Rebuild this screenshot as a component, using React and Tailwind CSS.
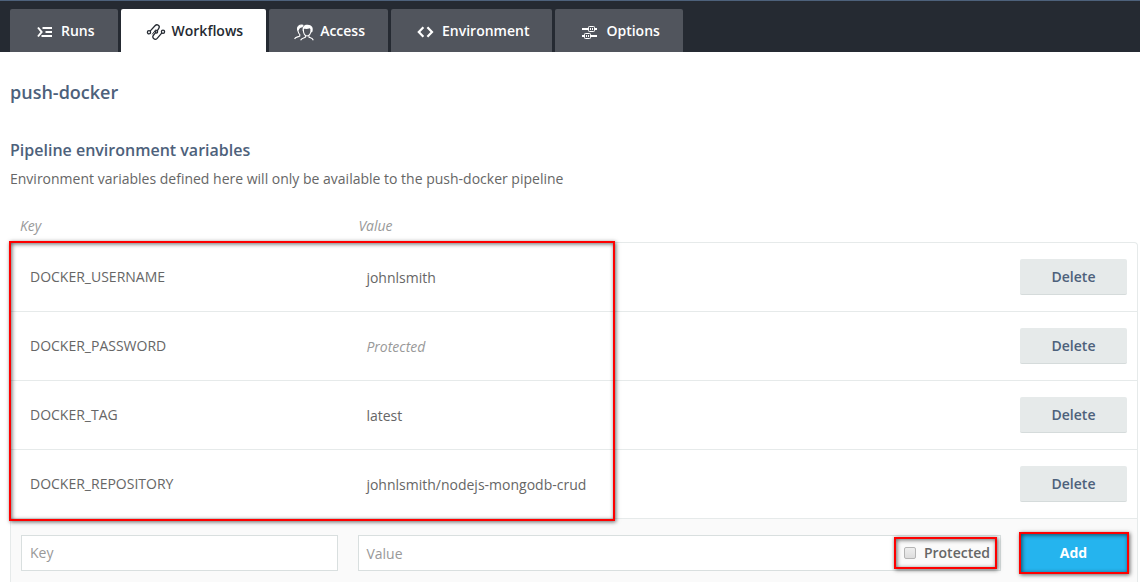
import React from "react";

function RunsIcon() {
  return (
    <svg className="shrink-0" width="16" height="12" viewBox="0 0 16 12" fill="none" stroke="currentColor" strokeWidth="2" aria-hidden="true">
      <path d="M1 1.5 L4.6 6 L1 10.5" />
      <path d="M5.5 2H15M8.5 6H15M4.5 10H15" />
    </svg>
  );
}

function WorkflowsIcon() {
  return (
    <svg className="shrink-0" width="20" height="18" viewBox="0 0 20 18" fill="none" stroke="currentColor" strokeWidth="1.3" aria-hidden="true">
      <circle cx="3" cy="9.3" r="1.6" />
      <circle cx="17" cy="8.7" r="1.6" />
      <circle cx="10.4" cy="8.8" r="1.2" />
      <path d="M4.1 8.1 L9 2.8 C11.2 .4 14.4 3 12.8 5.4 L11.2 7.8" />
      <path d="M9.4 9.8 L7.6 12 C5.4 14.6 8.8 17.8 11.2 15.4 L15.9 9.9" />
      <path d="M6.2 11.4 L10 6.4" strokeWidth="1" />
    </svg>
  );
}

function AccessIcon() {
  return (
    <svg className="shrink-0" width="20" height="17" viewBox="0 0 20 17" fill="none" stroke="currentColor" strokeWidth="1.1" aria-hidden="true">
      <path d="M9.4 5.5 C9.2 9 10.6 12 13 12 C15.6 12 17.2 9 17 5.5" />
      <path d="M8.8 7.2 C8 3 10 .6 13 .7 C17.3 .3 20 3.4 18.3 8 L17.1 8.4 C17 6.5 16.8 5.4 15.8 4.2 C14 5.2 11.4 5 10.2 4.8 Z" fill="currentColor" stroke="none" />
      <path d="M11.4 11.4 V13.2 C9.4 14 7.4 14.2 6.6 16.2 M15 11.4 V13.2 C17 14 18.6 14.2 19.3 16.2" />
      <path d="M9.2 1.2 C5.4 .4 2.6 2.6 3.8 6.4 C4.2 8.2 4.6 9.6 5.8 10.6 V12 C4 13.2 1.2 12.8 .6 15" />
      <path d="M3.6 6.6 C2.8 3 5 .6 9.6 1 L8.4 3.4 C6.8 3.4 5.4 3.8 4.6 6.4 Z" fill="currentColor" stroke="none" />
    </svg>
  );
}

function EnvironmentIcon() {
  return (
    <svg className="shrink-0" width="18" height="12" viewBox="0 0 18 12" fill="none" stroke="currentColor" strokeWidth="2.2" aria-hidden="true">
      <path d="M6.4 1.2 L1.8 6 L6.4 10.8 M10.4 1.2 L15 6 L10.4 10.8" />
    </svg>
  );
}

function OptionsIcon() {
  return (
    <svg className="shrink-0" width="16" height="13" viewBox="0 0 16 13" fill="none" stroke="currentColor" aria-hidden="true">
      <path d="M0 3H6M13 3H15M0 10H2M9 10H15" strokeWidth="2" />
      <rect x="6.5" y=".5" width="6" height="5" rx=".8" />
      <rect x="2.5" y="7.5" width="6" height="5" rx=".8" />
      <path d="M8.5 2V4M10.5 2V4M4.5 9V11M6.5 9V11" />
    </svg>
  );
}

const tabs = [
  { label: "Runs", Icon: RunsIcon },
  { label: "Workflows", Icon: WorkflowsIcon, active: true },
  { label: "Access", Icon: AccessIcon },
  { label: "Environment", Icon: EnvironmentIcon },
  { label: "Options", Icon: OptionsIcon },
];

const variables = [
  { name: "DOCKER_USERNAME", value: "johnlsmith" },
  { name: "DOCKER_PASSWORD", value: "Protected", hidden: true },
  { name: "DOCKER_TAG", value: "latest" },
  { name: "DOCKER_REPOSITORY", value: "johnlsmith/nodejs-mongodb-crud" },
];

function Highlight({ className }) {
  return (
    <div
      aria-hidden="true"
      className={
        "pointer-events-none absolute border-2 border-[#fe0000] shadow-[1px_1px_4px_rgba(0,0,0,0.6),inset_1px_1px_4px_rgba(0,0,0,0.6)] " +
        className
      }
    />
  );
}

export default function App() {
  return (
    <div className="bg-white font-['Open_Sans',sans-serif] text-sm text-[#666666]">
      <header className="border-t border-[#4d617b] bg-[#252a32] px-2.5 pt-2">
        <nav className="flex gap-[3px]">
          {tabs.map(({ label, Icon, active }) => (
            <a
              key={label}
              href={"#" + label.toLowerCase()}
              aria-current={active ? "page" : undefined}
              className={
                "flex h-[43px] items-center gap-[7px] rounded-t-xs pr-[23px] pl-[26px] font-semibold " +
                (active ? "bg-white text-[#252a32]" : "bg-[#51555d] text-white")
              }
            >
              <span className="flex w-[18px] justify-center pt-[3px]">
                <Icon />
              </span>
              {label}
            </a>
          ))}
        </nav>
      </header>

      <main className="pr-0.5 pl-2.5">
        <h1 className="pt-7 text-lg leading-6 font-semibold text-[#4d617b]">push-docker</h1>
        <h2 className="pt-9 text-base leading-5 font-semibold text-[#4d617b]">Pipeline environment variables</h2>
        <p className="pt-[7px] leading-6">Environment variables defined here will only be available to the push-docker pipeline</p>

        <div className="relative pt-[25px]">
          <table className="w-full table-fixed border-separate border-spacing-0">
            <colgroup>
              <col className="w-[30%]" />
              <col />
              <col className="w-[127px]" />
            </colgroup>
            <thead>
              <tr className="h-[26px] text-left align-top text-[#999999] italic">
                <th scope="col" className="px-2.5 font-normal">Key</th>
                <th scope="col" className="px-2.5 font-normal">Value</th>
                <td />
              </tr>
            </thead>
            <tbody>
              {variables.map(({ name, value, hidden }, i) => (
                <tr key={name} className="h-[69px]">
                  <td className={"border-t border-l border-[#e6eaea] pl-[19px] " + (i === 0 ? "rounded-tl" : "")}>{name}</td>
                  <td className={"border-t border-[#e6eaea] pt-0.5 pl-[18px] " + (hidden ? "text-[#999999] italic" : "")}>{value}</td>
                  <td className={"border-t border-r border-[#e6eaea] pr-2.5 " + (i === 0 ? "rounded-tr" : "")}>
                    <button
                      type="button"
                      className="ml-auto block h-9 w-[107px] rounded-xs border-b border-[#d5dbdb] bg-[#e6eaea] font-semibold text-[#4d617b]"
                    >
                      Delete
                    </button>
                  </td>
                </tr>
              ))}
            </tbody>
            <tfoot>
              <tr className="h-16 bg-[#fafafa]">
                <td className="border-t border-l border-[#e6eaea] px-2.5 pt-[5px]">
                  <input
                    aria-label="Key"
                    placeholder="Key"
                    className="block h-9 w-full border border-[#d9dfdf] bg-white px-2 pb-0.5 placeholder:text-[#999999]"
                  />
                </td>
                <td className="border-t border-[#e6eaea] px-2.5 pt-[5px]">
                  <div className="flex h-9 border border-[#d9dfdf] bg-white">
                    <input
                      aria-label="Value"
                      placeholder="Value"
                      className="min-w-0 flex-1 px-[7px] pt-0.5 placeholder:text-[#999999]"
                    />
                    <label className="relative flex items-center gap-2 bg-[#fafafa] pr-2.5 pl-3 font-semibold">
                      <input
                        type="checkbox"
                        className="size-3 appearance-none rounded-xs border border-[#b5b5b5] bg-linear-to-b from-[#eeeeee] to-[#dddddd] checked:bg-[#4d617b]"
                      />
                      Protected
                      <Highlight className="inset-y-px right-[3px] left-0.5" />
                    </label>
                  </div>
                </td>
                <td className="border-t border-r border-[#e6eaea] pt-[5px] pr-2.5">
                  <div className="relative ml-auto w-[107px]">
                    <button type="button" className="block h-10 w-full bg-[#25b4ee] font-bold text-white">
                      Add
                    </button>
                    <Highlight className="-inset-y-px -right-0.5 -left-px" />
                  </div>
                </td>
              </tr>
            </tfoot>
          </table>
          <Highlight className="bottom-[61px] -left-px h-[280px] w-[606px]" />
        </div>
      </main>
    </div>
  );
}
